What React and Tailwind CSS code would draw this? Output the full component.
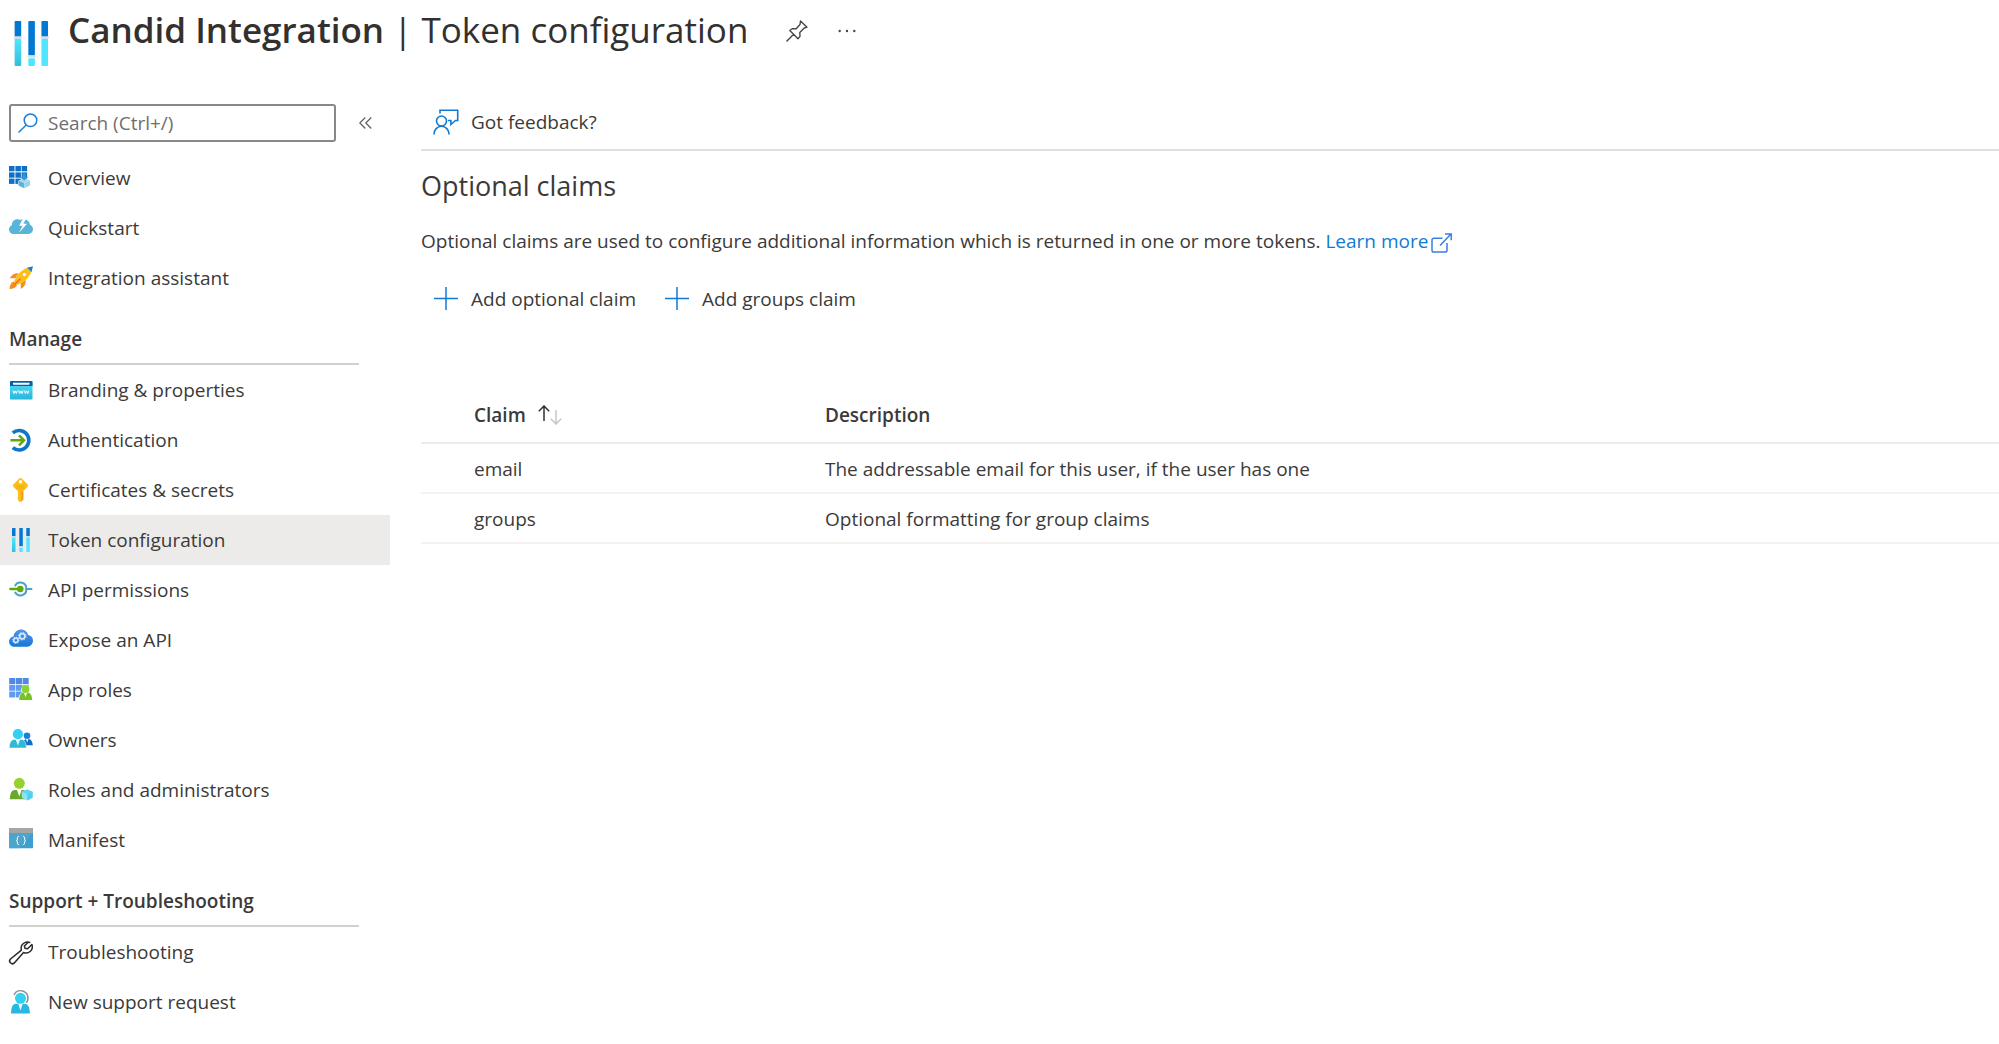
import React from "react";

function Icon({ children, className = "size-6" }) {
  return (
    <svg viewBox="0 0 24 24" fill="none" aria-hidden="true" className={`${className} shrink-0 overflow-visible`}>
      {children}
    </svg>
  );
}

const OverviewIcon = () => (
  <Icon>
    {[0, 6.4, 12.6].map((y) =>
      [0, 6.4, 12.6].map((x) => (
        <rect key={`${x}-${y}`} x={x} y={y} width="5.5" height="5.3" fill="#0f6fc6" />
      ))
    )}
    <path d="M9 15.2 15.2 12l6.2 3.2v4.6L15.2 22.4 9 19.8Z" fill="#fff" />
    <path d="m9.4 14.6 5.8-2.6 5.8 2.6-5.8 2.3Z" fill="#a5dcf2" />
    <path d="M9.4 14.6 15.2 17v5.2l-5.8-2.6Z" fill="#59b4d9" />
    <path d="m21 14.6-5.8 2.4v5.2l5.8-2.6Z" fill="#9bd3ea" />
    <path d="M13.6 7.5h3.2v3.4h2.4l-4 3.6-4-3.6h2.4Z" fill="#3999c6" />
  </Icon>
);

const QuickstartIcon = () => (
  <Icon>
    <path
      d="M4.5 18A4.4 4.4 0 0 1 0 13.600C0 11.400 1.300 9.900 3 9.300 2.700 6.300 4.700 3.800 7.500 3.300c1.400-.3 2.600 0 3.700.7A6.500 6.500 0 0 1 21 8.800c1.800.6 3 2.300 3 4.500A4.600 4.600 0 0 1 19.400 18Z"
      fill="#59b4d9"
    />
    <path d="m14.400 1.500-4.200 8.200h3.300l-3.500 7 8-9h-3.600l3.400-6.200Z" fill="#fff" />
  </Icon>
);

const RocketIcon = () => (
  <Icon>
    <path d="M9.500 7.200C6 6.800 2.600 8.600.800 12.300l5.600-.1Z" fill="#f78d1e" />
    <path d="M16.700 14c.3 3.700-1.200 7-4.900 8.900l-.1-5.600Z" fill="#f78d1e" />
    <path d="M4.500 15.500C2 16.300.700 19.500.500 23c3.600 0 6.700-1.400 7.600-4Z" fill="#f78d1e" />
    <path d="M5 16C7 9.500 12 3.800 19 1.400l3.700 3.700C20.300 12 14.500 17 8 19Z" fill="#fcbf17" />
    <path d="m18 1.800 6-1.600-1.600 6C21.200 4.500 19.700 3 18 1.800Z" fill="#1c7fbd" />
    <circle cx="15.300" cy="8.500" r="2.100" fill="#fff" stroke="#f9a61a" strokeWidth=".7" />
    <path d="m5.800 18.200 5.600-5.600" stroke="#e8641b" strokeWidth="1.300" />
  </Icon>
);

const BrandingIcon = () => (
  <Icon>
    <defs>
      <linearGradient id="brand" x1="0" y1="0" x2="0" y2="1">
        <stop stopColor="#50e0fa" />
        <stop offset="1" stopColor="#28b5db" />
      </linearGradient>
    </defs>
    <rect x="1" y="3" width="22.500" height="18.500" rx=".8" fill="url(#brand)" />
    <path d="M1.800 3h20.900c.4 0 .8.300.8.800V8H1V3.800c0-.5.300-.8.800-.8Z" fill="#0b5fa8" />
    <rect x="4" y="4.700" width="16.500" height="2" rx=".4" fill="#fff" />
    <path
      d="m4 12.500 1 3 1.200-2.600 1.200 2.600 1-3m1.300 0 1 3 1.200-2.600 1.200 2.600 1-3m1.300 0 1 3 1.200-2.600 1.200 2.600 1-3"
      stroke="#fff"
      strokeWidth="1"
    />
  </Icon>
);

const AuthIcon = () => (
  <Icon>
    <path d="M3.800 4.900A9.700 9.700 0 1 1 3.800 19.600" stroke="#0f74cb" strokeWidth="3.600" />
    <path d="M1.400 12.300h13M10 7.300l5 5-5 5" stroke="#5ea90e" strokeWidth="2.500" />
  </Icon>
);

const KeyIcon = () => (
  <Icon>
    <path
      d="M10.200.6a1.800 1.800 0 0 1 2.500 0l5.700 5.700c.8.800.8 1.900 0 2.700l-4.100 4.200v8.300L12.400 23.700h-1.900l-1.600-1.800v-8.700L4.500 9a1.900 1.900 0 0 1 0-2.700Z"
      fill="#fdbf14"
    />
    <path d="M12.300 13.500h2v8l-2 2Z" fill="#f29a1b" />
    <circle cx="11.500" cy="3.700" r="1.700" fill="#fff" />
    <path d="M7.600 8.200h7.800M7.600 10h7.800" stroke="#f0a50f" strokeWidth=".9" />
  </Icon>
);

function TokenIcon({ className }) {
  return (
    <svg viewBox="0 0 24 24" fill="none" aria-hidden="true" className={`${className} shrink-0`}>
      <defs>
        <linearGradient id="token" x1="0" y1="0" x2="0" y2="1">
          <stop stopColor="#50e6ff" />
          <stop offset="1" stopColor="#32bedd" />
        </linearGradient>
      </defs>
      <rect x="3" width="3.500" height="8.500" rx=".4" fill="#0078d4" />
      <rect x="10.300" width="3.500" height="18.400" rx=".4" fill="#0078d4" />
      <rect x="17.300" width="3.500" height="8.500" rx=".4" fill="#0078d4" />
      <rect x="2.600" y="8.100" width="4.300" height="1.300" rx=".3" fill="#dcdcdc" />
      <rect x="9.900" y="18.200" width="4.300" height="1.300" rx=".3" fill="#dcdcdc" />
      <rect x="16.900" y="8.100" width="4.300" height="1.300" rx=".3" fill="#dcdcdc" />
      <rect x="3" y="9.400" width="3.500" height="14.600" rx=".4" fill="url(#token)" />
      <rect x="10.300" y="19.900" width="3.500" height="4.100" rx=".4" fill="#50e6ff" />
      <rect x="17.300" y="9.400" width="3.500" height="14.600" rx=".4" fill="#50e6ff" />
    </svg>
  );
}

const ApiPermissionsIcon = () => (
  <Icon>
    <path d="M6.200 7.400A6 6 0 0 1 17.300 11 6 6 0 0 1 6.200 14.600M17.300 11h5.200" stroke="#4aa3cf" strokeWidth="2" strokeLinecap="round" />
    <path d="M1.300 11h9" stroke="#5ea90e" strokeWidth="2.300" strokeLinecap="round" />
    <circle cx="11.300" cy="11" r="3.300" fill="#5ea90e" />
  </Icon>
);

const ExposeIcon = () => (
  <Icon>
    <defs>
      <linearGradient id="cloud" x1="0" y1="0" x2="0" y2="1">
        <stop stopColor="#5396ec" />
        <stop offset="1" stopColor="#1577d8" />
      </linearGradient>
    </defs>
    <path
      d="M5.300 18.700A5.300 5.300 0 0 1 0 13.500c0-2.600 2-4.700 4.500-5A7.300 7.300 0 0 1 12 1.500c3.500 0 6.300 2.100 7.200 5.500A5.900 5.900 0 0 1 24 12.900a5.900 5.900 0 0 1-6 5.800Z"
      fill="url(#cloud)"
    />
    <circle cx="6.900" cy="12.300" r="2.200" stroke="#d7e8fb" strokeWidth="1.600" />
    <circle cx="6.900" cy="12.300" r="3.200" stroke="#d7e8fb" strokeWidth=".9" strokeDasharray="1.200 1.300" />
    <circle cx="13.300" cy="8.200" r="2.600" stroke="#d7e8fb" strokeWidth="1.700" />
    <circle cx="13.300" cy="8.200" r="3.800" stroke="#d7e8fb" strokeWidth="1" strokeDasharray="1.500 1.480" />
  </Icon>
);

const AppRolesIcon = () => (
  <Icon>
    {[0, 6.700, 13.400].map((y) =>
      [0.200, 6.900, 13.600].map((x) => (
        <rect key={`${x}-${y}`} x={x} y={y} width="6.100" height="6" rx=".3" fill={y < 5 ? "#5089e4" : "#5f9bf0"} />
      ))
    )}
    <path d="M10 22c0-4 1.500-7 4-7.500a4 4 0 1 1 5 0c2.700.5 4.400 3.500 4.400 7.500Z" fill="#fff" stroke="#fff" strokeWidth="1" />
    <path d="M10.200 22c0-4.500 1.800-7.600 4.400-7.600h4c2.600 0 4.600 3.100 4.600 7.600Z" fill="#76c326" />
    <path d="m14.800 14.300 1.700 5 1.800-5Z" fill="#fff" />
    <circle cx="16.500" cy="11" r="3.900" fill="#86d633" />
  </Icon>
);

const OwnersIcon = () => (
  <Icon>
    <path d="M14 17.200c.3-4 1.700-6.200 3.200-6.200h2.500c2.200 0 3.900 3 4.100 6.200Z" fill="#0f6fc6" />
    <path d="m17 11 1.200 3.600 1.300-3.600Z" fill="#fff" />
    <circle cx="18" cy="7.700" r="3.300" fill="#1a80dc" />
    <path d="M.200 20c.3-5.600 2-8.500 5-8.500h7.300c3 0 4.700 3.300 4.900 8.500Z" fill="#2fb8d8" stroke="#fff" strokeWidth=".5" />
    <path d="m6.600 11 2.300 6.800 2.300-6.800Z" fill="#e8fafe" />
    <circle cx="8.900" cy="6.200" r="5.100" fill="#32d0f1" />
  </Icon>
);

const RolesIcon = () => (
  <Icon>
    <path d="M.800 21.200c.2-6 2-9.200 5-9.200h8.400c2.600 0 4.300 3.400 4.300 9.200Z" fill="#6aa82b" />
    <path d="m7.600 11 2.700 7.600L13 11Z" fill="#fff" />
    <circle cx="10.300" cy="5.300" r="5.500" fill="#95d12f" />
    <path d="m12.800 13.800 5.500-2.200 5.300 2.200v6l-5.300 2.600-5.500-2.600Z" fill="#8be3f7" />
    <path d="m12.800 13.800 5.500 2.200 5.300-2.200-5.300-2.200Z" fill="#5fd3f0" />
    <path d="m18.300 16 5.300-2.200v6l-5.300 2.600Z" fill="#50cdf0" />
  </Icon>
);

const ManifestIcon = () => (
  <Icon>
    <rect y="0" width="24" height="20.200" rx=".6" fill="#3e9fca" />
    <path d="M0 4.900h24L10 20.200H.600a.6.600 0 0 1-.6-.6Z" fill="#55abd1" opacity=".6" />
    <path d="M.600 0h22.800c.3 0 .6.300.6.600v4.300H0V.600C0 .300.300 0 .600 0Z" fill="#a3a5a6" />
    <path
      d="M10 8.400c-1.300 0-1.600.5-1.600 1.500v1.300c0 .8-.3 1.200-1.100 1.300.8.100 1.100.5 1.100 1.300v1.300c0 1 .3 1.500 1.600 1.500m4-8.200c1.300 0 1.600.5 1.600 1.500v1.300c0 .8.300 1.200 1.100 1.300-.8.100-1.100.5-1.100 1.300v1.300c0 1-.3 1.500-1.600 1.500"
      stroke="#fff"
      strokeWidth="1"
    />
  </Icon>
);

const WrenchIcon = () => (
  <Icon>
    <path
      d="M21.300 2.700a6.300 6.300 0 0 0-8.900 7.400L1.500 19a2.700 2.700 0 0 0 3.800 3.900l9.200-10.400a6.300 6.300 0 0 0 8.400-8l-4.300 4.300-2.600-.5-.6-2.300 4.400-4.300"
      stroke="#2b2a29"
      strokeWidth="1.500"
      strokeLinejoin="round"
    />
  </Icon>
);

const SupportIcon = () => (
  <Icon>
    <path d="M5 5C7 .800 11-.200 14.500 1.300c3.700 1.700 5 5.200 4.300 8.700-.2 1-.9 2-2 2.600" stroke="#8a8f94" strokeWidth="1.500" />
    <path d="M2 23.600c.3-6.500 1.500-9.800 5-9.800h8.600c3.500 0 5 3.300 5.300 9.800Z" fill="#29b6e0" />
    <path d="m8.800 12.500 2.700 8 2.700-8Z" fill="#e6f9fe" />
    <circle cx="11.500" cy="8.300" r="5.500" fill="#32d0f5" />
  </Icon>
);

const PlusIcon = () => (
  <Icon className="h-6 w-[26px]">
    <path d="M12 0v23M0 11.500h24" stroke="#0f7bd5" strokeWidth="1.500" />
  </Icon>
);

const FeedbackIcon = () => (
  <svg viewBox="0 0 26 26" fill="none" aria-hidden="true" className="size-[26px] shrink-0">
    <circle cx="8.500" cy="12" r="5" stroke="#0f7bd5" strokeWidth="1.600" />
    <path d="M1 25.600c0-4.800 3.200-8.300 7.500-8.300s7.500 3.500 7.500 8.300M7 4.500V1.200h17.700v10.300h-2.200l-4.600 4v-4h-3" stroke="#0f7bd5" strokeWidth="1.600" />
  </svg>
);

const general = [
  ["Overview", OverviewIcon],
  ["Quickstart", QuickstartIcon],
  ["Integration assistant", RocketIcon],
];

const manage = [
  ["Branding & properties", BrandingIcon],
  ["Authentication", AuthIcon],
  ["Certificates & secrets", KeyIcon],
  ["Token configuration", () => <TokenIcon className="size-6" />],
  ["API permissions", ApiPermissionsIcon],
  ["Expose an API", ExposeIcon],
  ["App roles", AppRolesIcon],
  ["Owners", OwnersIcon],
  ["Roles and administrators", RolesIcon],
  ["Manifest", ManifestIcon],
];

const support = [
  ["Troubleshooting", WrenchIcon],
  ["New support request", SupportIcon],
];

const claims = [
  ["email", "The addressable email for this user, if the user has one"],
  ["groups", "Optional formatting for group claims"],
];

function NavList({ items, current }) {
  return (
    <ul>
      {items.map(([label, Glyph]) => (
        <li key={label}>
          <a
            href="#"
            aria-current={label === current ? "page" : undefined}
            className="flex h-[50px] items-center gap-[15px] pl-[9px] aria-[current=page]:bg-[#edebe9]"
          >
            <Glyph />
            <span>{label}</span>
          </a>
        </li>
      ))}
    </ul>
  );
}

function NavHeading({ children }) {
  return (
    <h2 className="mr-[31px] ml-[9px] flex h-[62px] items-center border-b-2 border-[#d2d0ce] pt-3 font-semibold">
      {children}
    </h2>
  );
}

function CommandButton({ icon, children }) {
  return (
    <button type="button" className="flex items-center gap-3">
      {icon}
      <span>{children}</span>
    </button>
  );
}

export default function App() {
  return (
    <div className="min-h-screen bg-white font-['Open_Sans',sans-serif] text-[19px] leading-7 text-[#3b3a39]">
      <header className="flex h-[92px] items-start pl-[9px]">
        <TokenIcon className="mt-[21px] size-[45px]" />
        <h1 className="ml-[14px] text-[35px] leading-[60px] whitespace-nowrap text-[#323130]">
          <span className="font-semibold">Candid Integration</span> | Token configuration
        </h1>
        <button type="button" aria-label="Pin" className="mt-5 ml-[38px]">
          <svg viewBox="0 0 22 22" fill="none" className="size-[22px]">
            <path
              d="m14.500 1 6.500 6.200-2.700.8-4.500 4.500.2 3.900-2 2.400-8.200-8.300 2.400-1.800 3.900.1L14 4.500ZM7.600 14.300.500 21.400"
              stroke="#484644"
              strokeWidth="1.400"
              strokeLinejoin="round"
            />
          </svg>
        </button>
        <button type="button" aria-label="More" className="mt-5 ml-[30px]">
          <svg viewBox="0 0 18 22" fill="#484644" className="h-[22px] w-[18px]">
            <circle cx="1.700" cy="11" r="1.200" />
            <circle cx="9" cy="11" r="1.200" />
            <circle cx="16.300" cy="11" r="1.200" />
          </svg>
        </button>
      </header>

      <div className="flex">
        <nav className="w-[390px] shrink-0" aria-label="Resource menu">
          <div className="flex h-[61px] items-center pl-[9px]">
            <label className="flex h-[38px] w-[327px] items-center rounded-[3px] border-2 border-[#8a8886] pl-[7px]">
              <svg viewBox="0 0 20 20" fill="none" aria-hidden="true" className="size-5 shrink-0">
                <circle cx="12.500" cy="7.300" r="6.300" stroke="#1a80dc" strokeWidth="1.500" />
                <path d="m8.200 12-7.700 7.500" stroke="#1a80dc" strokeWidth="1.500" />
              </svg>
              <input
                type="text"
                aria-label="Search"
                placeholder="Search (Ctrl+/)"
                className="ml-2.5 min-w-0 flex-1 bg-transparent outline-none placeholder:text-[#706e6c]"
              />
            </label>
            <button type="button" aria-label="Collapse menu" className="ml-[23px]">
              <svg viewBox="0 0 13 12" fill="none" className="h-3 w-[13px]">
                <path d="M6.300.500.800 6l5.500 5.500M12.300.500 6.800 6l5.500 5.500" stroke="#605e5c" strokeWidth="1.200" />
              </svg>
            </button>
          </div>
          <NavList items={general} />
          <NavHeading>Manage</NavHeading>
          <NavList items={manage} current="Token configuration" />
          <NavHeading>Support + Troubleshooting</NavHeading>
          <NavList items={support} />
        </nav>

        <main className="ml-[31px] min-w-0 flex-1">
          <div className="flex h-[59px] items-center border-b-2 border-[#e1dfdd] pt-0.5 pl-3">
            <CommandButton icon={<FeedbackIcon />}>Got feedback?</CommandButton>
          </div>
          <h2 className="mt-[17px] text-[27px] leading-9">Optional claims</h2>
          <p className="mt-[23px]">
            Optional claims are used to configure additional information which is returned in one or more tokens.{" "}
            <a href="#" className="inline-flex items-center gap-[3px] text-[#0f7bd5]">
              Learn more
              <svg viewBox="0 0 21 20" fill="none" aria-hidden="true" className="mt-1 h-5 w-[21px]">
                <path
                  d="M11.500 5.200H2.800c-1 0-1.800.8-1.800 1.800v10.200c0 1 .8 1.800 1.800 1.800h11.400c1 0 1.800-.8 1.800-1.800V10M9 12.500 20 1M14 .900h6.200v6.300"
                  stroke="#3b7de8"
                  strokeWidth="1.500"
                />
              </svg>
            </a>
          </p>
          <div className="mt-[30px] flex gap-7 pl-3">
            <CommandButton icon={<PlusIcon />}>Add optional claim</CommandButton>
            <CommandButton icon={<PlusIcon />}>Add groups claim</CommandButton>
          </div>

          <table className="mt-[74px] w-full table-fixed border-collapse text-left">
            <colgroup>
              <col className="w-[404px]" />
              <col />
            </colgroup>
            <thead>
              <tr className="h-[56px] border-b-2 border-[#edebe9]">
                <th className="pl-[53px] font-semibold" aria-sort="ascending">
                  <button type="button" className="flex items-center gap-3">
                    Claim
                    <svg viewBox="0 0 24 20" fill="none" aria-hidden="true" className="h-5 w-6">
                      <path d="M6 16V1M.800 6.300 6 1l5.200 5.300" stroke="#323130" strokeWidth="1.500" />
                      <path d="M18 5v14M12.800 13.700 18 19l5.200-5.300" stroke="#c8c6c4" strokeWidth="1.500" />
                    </svg>
                  </button>
                </th>
                <th className="font-semibold">Description</th>
              </tr>
            </thead>
            <tbody>
              {claims.map(([claim, description]) => (
                <tr key={claim} className="h-[50px] border-b-2 border-[#f3f2f1]">
                  <td className="pt-0.5 pl-[53px]">{claim}</td>
                  <td className="pt-0.5">{description}</td>
                </tr>
              ))}
            </tbody>
          </table>
        </main>
      </div>
    </div>
  );
}
